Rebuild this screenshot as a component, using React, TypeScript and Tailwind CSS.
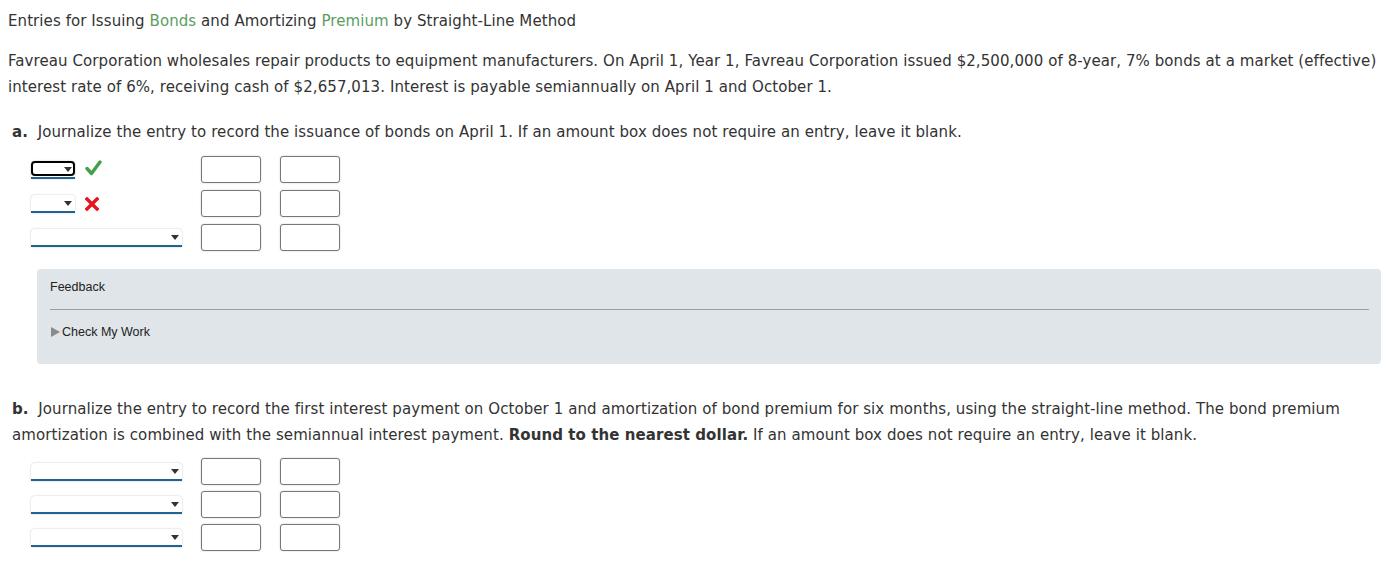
function SelectBox({ wide, focused }: { wide?: boolean; focused?: boolean }) {
  return (
    <div
      className={`relative h-[18px] bg-white rounded-t-[4px] shadow-[0_0_2px_rgba(0,0,0,0.25)] border-b-2 border-[#22628f] ${
        wide ? 'w-[151px]' : 'w-[44px]'
      }`}
    >
      {focused && (
        <div className="absolute left-0 right-0 top-0 bottom-[1px] rounded-[4px] border-2 border-black" />
      )}
      <div className="absolute right-[3px] top-[6px] w-0 h-0 border-l-[4px] border-r-[4px] border-t-[5px] border-l-transparent border-r-transparent border-t-[#333]" />
    </div>
  );
}

function AmountBox() {
  return (
    <div className="w-[60px] h-[27px] bg-white rounded-[3px] border border-[#777] shadow-[0_0_2px_rgba(0,0,0,0.2)]" />
  );
}

function Row({ mark, wide, focused }: { mark?: 'ok' | 'bad'; wide?: boolean; focused?: boolean }) {
  return (
    <div className="flex items-center h-[27px] pl-[31px]">
      <div className="w-[170px] flex items-center">
        <SelectBox wide={wide} focused={focused} />
        {mark === 'ok' && (
          <svg className="ml-[10px] mt-[-4px]" width="17" height="16" viewBox="0 0 17 16">
            <path d="M2 8.5 L6.5 13.5 L15 2" fill="none" stroke="#44a047" strokeWidth="3.4" strokeLinecap="round" strokeLinejoin="round" />
          </svg>
        )}
        {mark === 'bad' && (
          <svg className="ml-[10px]" width="14" height="14" viewBox="0 0 14 14">
            <path d="M2 2 L12 12 M12 2 L2 12" fill="none" stroke="#e8141c" strokeWidth="3.4" strokeLinecap="square" />
          </svg>
        )}
      </div>
      <AmountBox />
      <div className="w-[19px]" />
      <AmountBox />
    </div>
  );
}

export default function App() {
  return (
    <div
      className="bg-white text-[#333] text-[15px] tracking-[0.08px] w-[1385px] h-[565px] overflow-hidden"
      style={{ fontFamily: '"DejaVu Sans", Verdana, sans-serif' }}
    >
      <div className="pt-[11px] pl-[8px] leading-[20px]">
        Entries for Issuing <span className="text-[#5a9e5f]">Bonds</span> and Amortizing{' '}
        <span className="text-[#5a9e5f]">Premium</span> by Straight-Line Method
      </div>

      <p className="mt-[17px] pl-[8px] pr-[4px] leading-[26px]">
        Favreau Corporation wholesales repair products to equipment manufacturers. On April 1, Year 1, Favreau
        Corporation issued $2,500,000 of 8-year, 7% bonds at a market (effective) interest rate of 6%, receiving
        cash of $2,657,013. Interest is payable semiannually on April 1 and October 1.
      </p>

      <p className="mt-[19px] pl-[12px] leading-[26px]">
        <b>a.</b>&nbsp; Journalize the entry to record the issuance of bonds on April 1. If an amount box does not
        require an entry, leave it blank.
      </p>

      <div className="mt-[11px] flex flex-col gap-[7px]">
        <Row mark="ok" focused />
        <Row mark="bad" />
        <Row wide />
      </div>

      <div
        className="mt-[18px] ml-[37px] mr-[4px] bg-[#dfe5e9] rounded-[4px] pt-[10px] pb-[24px] pl-[13px] pr-[12px] text-[12.5px] tracking-normal text-[#222] leading-[16px]"
        style={{ fontFamily: '"Liberation Sans", Arial, sans-serif' }}
      >
        <div>Feedback</div>
        <div className="mt-[14px] h-px bg-[#9a9fa3]" />
        <div className="mt-[14px] flex items-center">
          <span className="inline-block w-0 h-0 border-t-[5px] border-b-[5px] border-l-[9px] border-t-transparent border-b-transparent border-l-[#8a8a8a] mr-[2px] ml-[1px]" />
          Check My Work
        </div>
      </div>

      <p className="mt-[32px] pl-[12px] pr-[4px] leading-[26px]">
        <b>b.</b>&nbsp; Journalize the entry to record the first interest payment on October 1 and amortization of
        bond premium for six months, using the straight-line method. The bond premium amortization is combined with
        the semiannual interest payment. <b>Round to the nearest dollar.</b> If an amount box does not require an
        entry, leave it blank.
      </p>

      <div className="mt-[10px] flex flex-col gap-[6px]">
        <Row wide />
        <Row wide />
        <Row wide />
      </div>
    </div>
  );
}
